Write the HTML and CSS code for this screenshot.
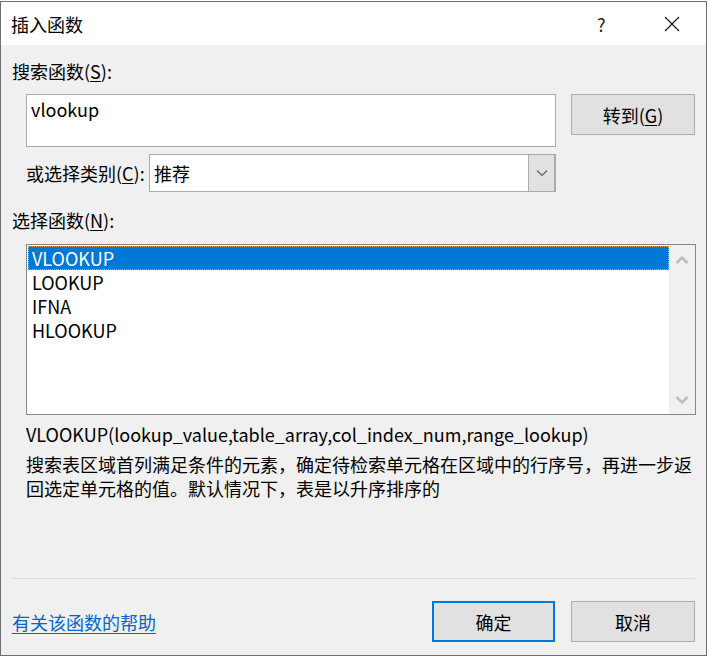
FILE: index.html
```html
<!DOCTYPE html>
<html lang="zh-CN">
<head>
<meta charset="utf-8">
<title>插入函数</title>
<link rel="stylesheet" href="styles.css">
</head>
<body>
<div class="dialog">
  <div class="titlebar">
    <span class="title">插入函数</span>
    <span class="help">?</span>
    <span class="close"><svg width="16" height="16" viewBox="0 0 16 16"><path d="M1 1L15 15M15 1L1 15" stroke="#111" stroke-width="1.1" fill="none"/></svg></span>
  </div>
  <div class="body">
    <div class="label">搜索函数(<u>S</u>):</div>
    <div class="row search-row">
      <div class="textbox">vlookup</div>
      <div class="btn goto">转到(<u>G</u>)</div>
    </div>
    <div class="row cat-row">
      <div class="cat-label">或选择类别(<u>C</u>):</div>
      <div class="select">
        <span class="select-value">推荐</span>
        <span class="select-arrow"><svg width="12" height="8" viewBox="0 0 12 8"><path d="M1 1.5L6 6.5L11 1.5" stroke="#606060" stroke-width="1.2" fill="none"/></svg></span>
      </div>
    </div>
    <div class="label label-fn">选择函数(<u>N</u>):</div>
    <div class="listbox">
      <ul class="items">
        <li class="item selected">VLOOKUP</li>
        <li class="item">LOOKUP</li>
        <li class="item">IFNA</li>
        <li class="item">HLOOKUP</li>
      </ul>
      <div class="scrollbar">
        <svg class="arrow" width="14" height="9" viewBox="0 0 14 9"><path d="M1.5 8L7 2.5L12.5 8" stroke="#bdbdbd" stroke-width="2.6" fill="none"/></svg>
        <svg class="arrow" width="14" height="9" viewBox="0 0 14 9"><path d="M1.5 1L7 6.5L12.5 1" stroke="#bdbdbd" stroke-width="2.6" fill="none"/></svg>
      </div>
    </div>
    <div class="signature">VLOOKUP(lookup_value,table_array,col_index_num,range_lookup)</div>
    <div class="desc">搜索表区域首列满足条件的元素，确定待检索单元格在区域中的行序号，再进一步返回选定单元格的值。默认情况下，表是以升序排序的</div>
  </div>
  <div class="footer">
    <div class="sep"></div>
    <div class="footer-row">
      <a class="help-link" href="#">有关该函数的帮助</a>
      <div class="btn ok">确定</div>
      <div class="btn cancel">取消</div>
    </div>
  </div>
</div>
</body>
</html>
```
FILE: styles.css
```css
* { box-sizing: border-box; }
html, body { margin: 0; padding: 0; }
body {
  background: #ffffff;
  padding-top: 1px;
  font-family: "Noto Sans CJK SC", "Noto Sans", sans-serif;
  font-size: 18px;
  color: #000;
}
u { text-decoration: underline; text-underline-offset: 2px; text-decoration-thickness: 1px; }
.dialog {
  width: 707px;
  height: 655px;
  border: 1px solid #6f6f6f;
  background: #f0f0f0;
  display: flex;
  flex-direction: column;
}
.titlebar {
  height: 43px;
  flex: none;
  background: #ffffff;
  display: flex;
  align-items: center;
  padding-left: 10px;
}
.title { font-size: 18px; line-height: 24px; flex: 1; }
.help { font-size: 18px; line-height: 24px; width: 67px; color: #222; }
.close { width: 42px; display: flex; align-items: center; height: 16px; }
.body {
  padding: 14px 11px 0 11px;
  display: flex;
  flex-direction: column;
}
.label { line-height: 24px; height: 24px; }
.row { display: flex; margin-left: 14px; }
.search-row { margin-top: 11px; align-items: flex-start; }
.textbox {
  width: 530px;
  height: 53px;
  background: #fff;
  border: 1px solid #a9a9a9;
  padding: 0 4px;
  line-height: 28px;
}
.btn {
  background: #e1e1e1;
  border: 1px solid #adadad;
  display: flex;
  align-items: center;
  justify-content: center;
  line-height: 24px;
}
.goto { width: 124px; height: 41px; margin-left: 15px; }
.cat-row { margin-top: 7px; align-items: center; }
.cat-label { width: 123px; line-height: 24px; }
.select {
  width: 407px;
  height: 38px;
  background: #fff;
  border: 1px solid #a9a9a9;
  display: flex;
}
.select-value { flex: 1; padding-left: 4px; line-height: 36px; }
.select-arrow {
  width: 27px;
  background: #e1e1e1;
  border-left: 1px solid #adadad;
  border-right: 1px solid #adadad;
  display: flex;
  align-items: center;
  justify-content: center;
}
.label-fn { margin-top: 16px; }
.listbox {
  margin: 12px 0 0 14px;
  width: 670px;
  height: 171px;
  border: 1px solid #828790;
  background: #fff;
  display: flex;
}
.items {
  list-style: none;
  margin: 0;
  padding: 1px 0 0 1px;
  flex: 1;
}
.item {
  height: 24px;
  line-height: 22px;
  padding-left: 3px;
  border: 1px solid transparent;
}
.item.selected {
  background: #0078d7;
  color: #fff;
  border: 1px dotted #f0a050;
}
.scrollbar {
  width: 26px;
  background: #f0f0f0;
  display: flex;
  flex-direction: column;
  align-items: center;
  justify-content: space-between;
  padding: 10px 0 9px;
}
.signature { margin: 7px 0 0 14px; line-height: 24px; }
.desc { margin: 6px 0 0 14px; line-height: 24px; width: 670px; }
.footer {
  margin-top: auto;
  padding: 0 11px 13px 11px;
}
.sep { height: 1px; background: #dcdcdc; }
.footer-row {
  margin-top: 22px;
  display: flex;
  align-items: center;
}
.help-link {
  flex: 1;
  color: #0066cc;
  text-decoration: underline;
  text-underline-offset: 3px;
  line-height: 24px;
}
.ok { width: 123px; height: 41px; border: 2px solid #0078d7; }
.cancel { width: 124px; height: 41px; margin-left: 16px; }
```
